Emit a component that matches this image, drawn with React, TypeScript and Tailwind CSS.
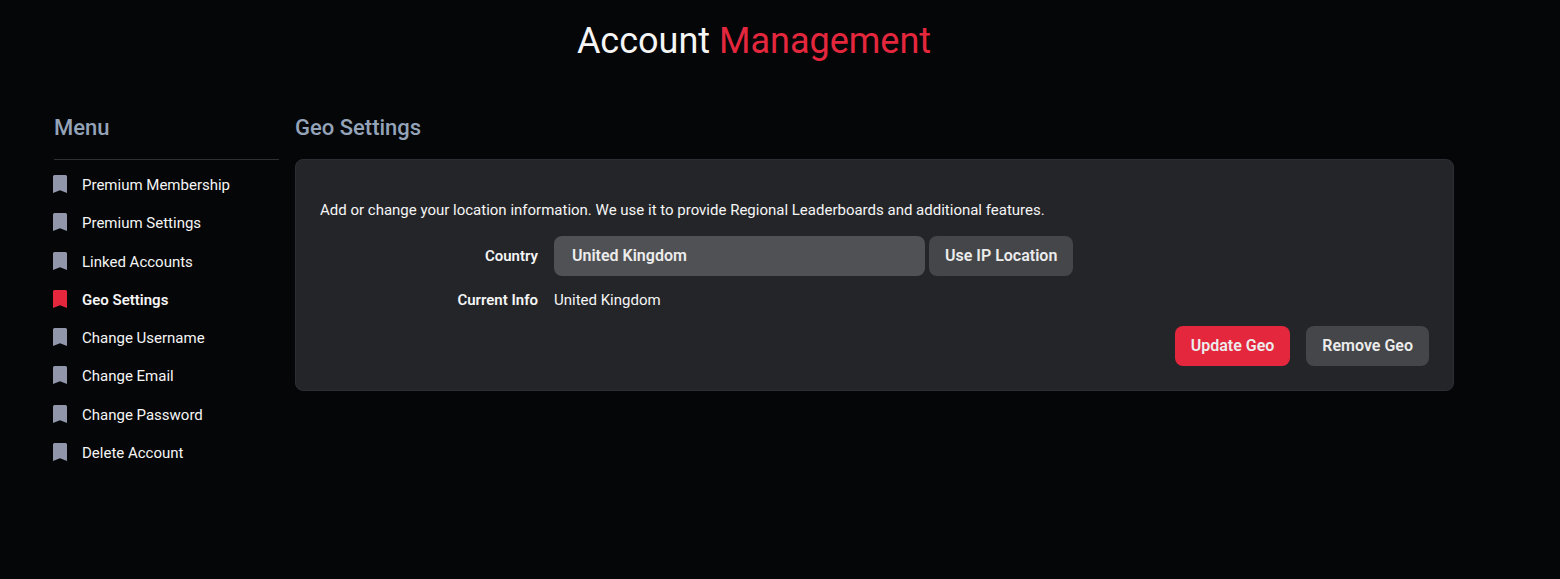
import { useState } from "react";

const menuItems = [
  "Premium Membership",
  "Premium Settings",
  "Linked Accounts",
  "Geo Settings",
  "Change Username",
  "Change Email",
  "Change Password",
  "Delete Account",
];

const countries = ["United Kingdom", "United States", "Germany", "France"];

function BookmarkIcon({ active }: { active: boolean }) {
  return (
    <svg
      viewBox="0 0 14 18"
      aria-hidden="true"
      className={active ? "mb-0.5 h-[18px] w-3.5 text-[#e4273d]" : "mb-0.5 h-[18px] w-3.5 text-[#9196ab]"}
    >
      <path
        fill="currentColor"
        d="M1.5 0h11A1.5 1.5 0 0 1 14 1.5V18L7 15.2 0 18V1.5A1.5 1.5 0 0 1 1.5 0Z"
      />
    </svg>
  );
}

function SectionHeading({ children }: { children: string }) {
  return (
    <h2 className="pt-px text-[22px] leading-8 font-medium text-[#94a3b8]">{children}</h2>
  );
}

function SideMenu({ current }: { current: string }) {
  return (
    <nav aria-label="Account" className="w-[225px] shrink-0">
      <SectionHeading>Menu</SectionHeading>
      <hr className="mt-[15px] mb-1.5 border-t border-[#2f3034]" />
      <ul className="-ml-px grid min-h-[306px] auto-rows-fr">
        {menuItems.map((item) => (
          <li key={item} className="flex">
            <a
              href="#"
              aria-current={item === current ? "page" : undefined}
              className={
                item === current
                  ? "flex items-center gap-[15px] font-semibold"
                  : "flex items-center gap-[15px]"
              }
            >
              <BookmarkIcon active={item === current} />
              {item}
            </a>
          </li>
        ))}
      </ul>
    </nav>
  );
}

function GeoPanel() {
  const [country, setCountry] = useState("United Kingdom");
  return (
    <section className="min-w-0 flex-1">
      <SectionHeading>Geo Settings</SectionHeading>
      <div className="mt-[15px] rounded-lg border border-[#2d2e34] bg-[#242529] px-6 pt-[38px] pb-6">
        <p>Add or change your location information. We use it to provide Regional Leaderboards and additional features.</p>
        <div className="mt-3.5 grid grid-cols-[218px_1fr] items-center gap-x-4 gap-y-3">
          <label htmlFor="country" className="text-right font-semibold">
            Country
          </label>
          <div className="flex gap-1">
            <select
              id="country"
              value={country}
              onChange={(event) => setCountry(event.target.value)}
              className="h-10 w-[371px] appearance-none rounded-lg bg-[#505154] px-[18px] text-base font-semibold text-[#ececec]"
            >
              {countries.map((name) => (
                <option key={name}>{name}</option>
              ))}
            </select>
            <button
              type="button"
              className="h-10 rounded-lg bg-[#454649] px-4 text-base font-semibold text-[#ececec]"
            >
              Use IP Location
            </button>
          </div>
          <span className="text-right font-semibold">Current Info</span>
          <span>United Kingdom</span>
        </div>
        <div className="mt-3.5 flex justify-end gap-4">
          <button
            type="button"
            className="h-10 rounded-lg bg-[#e4273d] px-4 text-base font-semibold text-[#ececec]"
          >
            Update Geo
          </button>
          <button
            type="button"
            className="h-10 rounded-lg bg-[#454649] px-4 text-base font-semibold text-[#ececec]"
          >
            Remove Geo
          </button>
        </div>
      </div>
    </section>
  );
}

export default function App() {
  return (
    <div className="min-h-screen bg-[#050608] pr-[106px] pb-12 pl-[54px] font-['Roboto',sans-serif] text-[15px] leading-6 text-[#f5f5f5]">
      <h1 className="pt-4 text-center text-[36px] leading-[50px] font-normal">
        Account <span className="text-[#e4273d]">Management</span>
      </h1>
      <main className="mt-[45px] flex gap-4">
        <SideMenu current="Geo Settings" />
        <GeoPanel />
      </main>
    </div>
  );
}
